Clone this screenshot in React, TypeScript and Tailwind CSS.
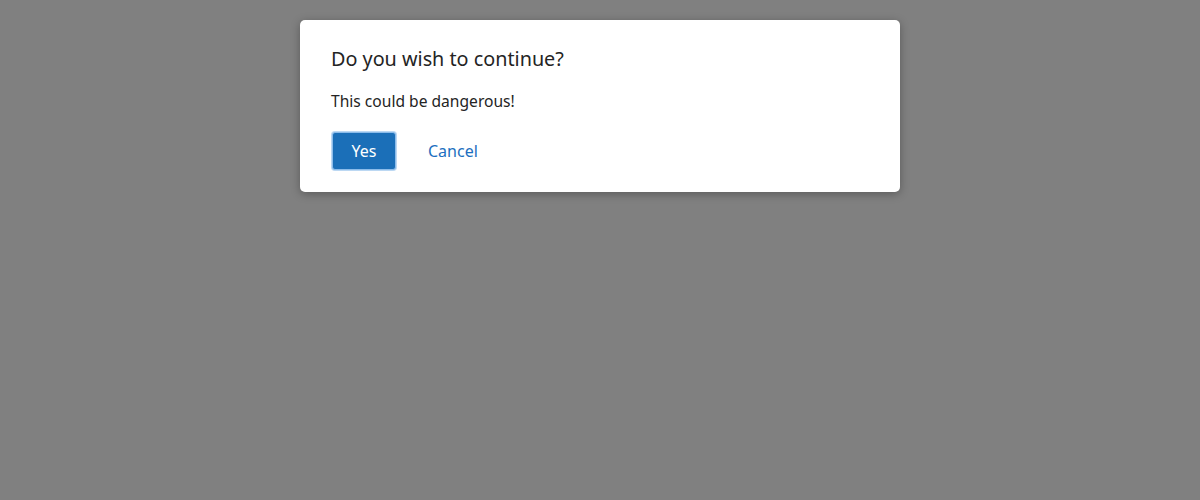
export default function App() {
  return (
    <div className="min-h-[500px] w-full bg-[#808080] flex justify-center pt-5" style={{ fontFamily: '"Noto Sans", "Open Sans", sans-serif' }}>
      <div className="w-[600px] h-[172px] bg-white rounded-[5px] shadow-[0_2px_10px_rgba(0,0,0,0.3)] pl-[31px] pt-[24px]">
        <h2 className="text-[19.8px] leading-[30px] text-[#242424]">Do you wish to continue?</h2>
        <p className="mt-[15px] text-[15.6px] leading-[24px] text-[#242424]">This could be dangerous!</p>
        <div className="mt-[19px] pl-px flex items-center gap-[12px]">
          <button className="w-[64px] h-[38px] rounded-[3px] bg-[#1b6fb8] text-white text-[16px] border border-[#8cbcea] shadow-[0_0_0_1px_#bcd8f3]">Yes</button>
          <button className="h-[38px] px-[20px] text-[#1c6fc0] text-[16px]">Cancel</button>
        </div>
      </div>
    </div>
  );
}
